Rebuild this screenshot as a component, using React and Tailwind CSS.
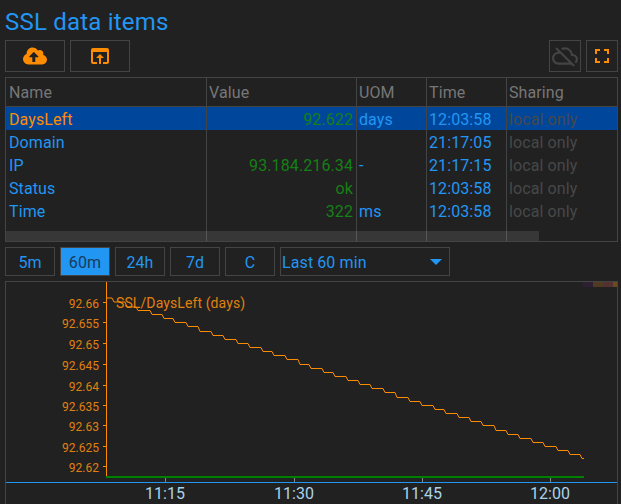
import { FaCloudUploadAlt } from 'react-icons/fa'
import { MdOpenInBrowser, MdOutlineCloudOff, MdFullscreen } from 'react-icons/md'

const ROWS = [
  { name: 'DaysLeft', value: '92.622', uom: 'days', time: '12:03:58', selected: true },
  { name: 'Domain', value: '', uom: '', time: '21:17:05' },
  { name: 'IP', value: '93.184.216.34', uom: '-', time: '21:17:15' },
  { name: 'Status', value: 'ok', uom: '', time: '12:03:58' },
  { name: 'Time', value: '322', uom: 'ms', time: '12:03:58' },
]

const RANGES = ['5m', '60m', '24h', '7d', 'C']

const Y_TICKS = [
  ['92.66', 302], ['92.655', 322], ['92.65', 343], ['92.645', 364], ['92.64', 385],
  ['92.635', 405], ['92.63', 425], ['92.625', 446], ['92.62', 466],
]

const X_TICKS = [['11:15', 165], ['11:30', 294], ['11:45', 422], ['12:00', 550]]

// [x where the step lands, y of the tread]
const STEPS = [
  [106, 298], [114, 302], [127, 307], [138, 310.5], [152, 314.5], [164, 318.5], [175, 322.5],
  [188, 326.5], [200, 331.5], [213, 335.5], [225, 339.5], [238, 343.5], [250, 347.5], [263, 351.5],
  [274, 355.5], [287, 359.5], [300, 364.5], [311, 368.5], [324, 372.5], [335, 376.5], [348, 380.5],
  [360, 384.5], [372, 388.5], [385, 392.5], [397, 397.5], [410, 401.5], [422, 405.5], [435, 409.5],
  [446, 413.5], [459, 417.5], [471, 421.5], [483, 425.5], [496, 430.5], [508, 434.5], [520, 438.5],
  [533, 442.5], [545, 446.5], [558, 450.5], [570, 454.5], [582, 458.5],
]

const linePoints = STEPS.map(([x, y], i) => {
  if (i === 0) return `${x},${y}`
  return `${x - 2},${STEPS[i - 1][1]} ${x},${y}`
}).join(' ') + ' 584,458.5'

const cols = 'grid grid-cols-[201px_150px_70px_80px_1fr]'

function ToolButton({ className, children }) {
  return (
    <button className={`flex h-8 items-center justify-center border border-[#444] ${className}`}>
      {children}
    </button>
  )
}

function Chart() {
  // svg sits in the bordered box, whose origin is page (6, 282)
  return (
    <svg className="block h-full w-full" viewBox="6 282 611 222" fontFamily="Roboto, sans-serif">
      <rect x="583" y="282" width="10" height="5" fill="#2f1f33" />
      <rect x="593" y="282" width="10" height="5" fill="#4f3c20" />
      <rect x="603" y="282" width="10" height="5" fill="#553030" />
      <rect x="613" y="282" width="4" height="5" fill="#6b4a20" />

      <line x1="106.5" y1="282" x2="106.5" y2="476" stroke="#ff8c00" />
      {Y_TICKS.map(([label, y]) => (
        <g key={label}>
          <line x1="103" y1={y + 0.5} x2="106" y2={y + 0.5} stroke="#ff8c00" />
          <text x="99" y={y + 6} textAnchor="end" fontSize="12" fill="#e08010">{label}</text>
        </g>
      ))}

      <text x="116" y="308" fontSize="14" letterSpacing="0.1" fill="#e08010">SSL/DaysLeft (days)</text>
      <polyline points={linePoints} fill="none" stroke="#ff8c00" strokeWidth="1" />
      <rect x="106" y="476" width="478" height="2" fill="#008000" />

      <line x1="6" y1="482.5" x2="617" y2="482.5" stroke="#2196f3" />
      {X_TICKS.map(([label, x]) => (
        <g key={label}>
          <line x1={x + 0.5} y1="478" x2={x + 0.5} y2="482" stroke="#888" />
          <text x={x} y="499" textAnchor="middle" fontSize="16" fill="#a9d3ea">{label}</text>
        </g>
      ))}
    </svg>
  )
}

export default function App() {
  return (
    <div className="flex h-[504px] w-[621px] flex-col overflow-hidden bg-[#212121] pl-[5px] pr-[3px] font-[Roboto,sans-serif] text-[#2196f3]">
      <h1 className="h-10 pt-[7px] text-2xl leading-[30px] tracking-[0.2px]">SSL data items</h1>

      <div className="flex gap-[5px]">
        <ToolButton className="w-[60px] text-[#ff8c00]"><FaCloudUploadAlt size={24} /></ToolButton>
        <ToolButton className="w-[60px] text-[#ff8c00]"><MdOpenInBrowser size={24} /></ToolButton>
        <div className="flex-1" />
        <ToolButton className="w-8 text-[#444]"><MdOutlineCloudOff size={26} /></ToolButton>
        <ToolButton className="w-8 text-[#ff8c00]"><MdFullscreen size={24} /></ToolButton>
      </div>

      <div className="relative mt-[5px] border border-[#444] text-base tracking-[0.1px]">
        <div className={`${cols} h-[29px] border-b border-[#444] leading-[29px] text-[#777]`}>
          <div className="border-r border-[#444] px-[3px]">Name</div>
          <div className="border-r border-[#444] px-[2px]">Value</div>
          <div className="border-r border-[#444] px-[2px]">UOM</div>
          <div className="border-r border-[#444] px-[2px]">Time</div>
          <div className="px-[2px]">Sharing</div>
        </div>
        {ROWS.map((r) => (
          <div key={r.name} className={`${cols} h-[23px] leading-[23px] ${r.selected ? 'bg-[#00479c]' : ''}`}>
            <div className={`border-r border-[#444] px-[3px] pt-px ${r.selected ? 'text-[#ff8c00]' : ''}`}>{r.name}</div>
            <div className="border-r border-[#444] px-[3px] pt-px text-right text-[#158015]">{r.value}</div>
            <div className="border-r border-[#444] px-[2px] pt-px">{r.uom}</div>
            <div className="border-r border-[#444] px-[2px] pt-px">{r.time}</div>
            <div className="px-[2px] pt-px text-[#484848]">local only</div>
          </div>
        ))}
        <div className={`${cols} h-[19px]`}>
          <div className="border-r border-[#444]" />
          <div className="border-r border-[#444]" />
          <div className="border-r border-[#444]" />
          <div className="border-r border-[#444]" />
          <div />
        </div>
        <div className="absolute bottom-0 left-0 h-[10px] w-[533px] bg-white/10" />
      </div>

      <div className="mt-[5px] flex h-[29px] gap-[5px]">
        {RANGES.map((r) => (
          <button
            key={r}
            className={`w-[50px] border border-[#444] pt-[2px] text-base tracking-[0.1px] ${r === '60m' ? 'bg-[#2196f3] text-[#173b5c]' : ''}`}
          >
            {r}
          </button>
        ))}
        <div className="flex w-[170px] items-center justify-between border border-[#444] pl-px pr-[7px] text-base tracking-[0.1px]">
          <span className="pt-[2px]">Last 60 min</span>
          <svg width="12" height="6" viewBox="0 0 12 6"><path d="M0 0h12L6 6z" fill="#2196f3" /></svg>
        </div>
      </div>

      <div className="mt-[5px] min-h-0 flex-1 border-x border-t border-[#444]">
        <Chart />
      </div>
    </div>
  )
}
